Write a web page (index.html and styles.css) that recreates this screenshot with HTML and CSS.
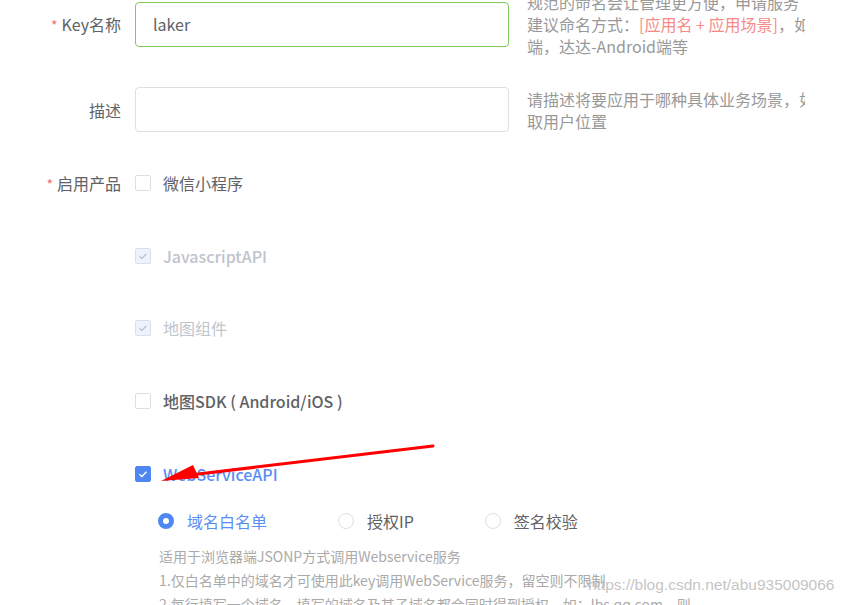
FILE: index.html
```html
<html>
  <head>
    <meta charset="UTF-8">
    <title>创建Key</title>
    <link rel="stylesheet" href="styles.css">
  </head>
  <body>
    <div class="page">
      <div class="form">
        <div class="form-row first">
          <div class="form-label"><span class="star">*</span>Key名称</div>
          <div class="input ok">laker</div>
          <div class="help">
            <div class="line">规范的命名会让管理更方便，申请服务</div>
            <div class="line">建议命名方式：<span class="hl">[应用名 + 应用场景]</span>，如：</div>
            <div class="line">端，达达-Android端等</div>
          </div>
        </div>

        <div class="form-row">
          <div class="form-label">描述</div>
          <div class="input"></div>
          <div class="help">
            <div class="line">请描述将要应用于哪种具体业务场景，如：</div>
            <div class="line">取用户位置</div>
          </div>
        </div>

        <div class="form-row products">
          <div class="form-label"><span class="star">*</span>启用产品</div>
          <div class="product-list">
            <div class="check-item">
              <span class="box"></span>
              <span class="check-text">微信小程序</span>
            </div>
            <div class="check-item disabled">
              <span class="box">
                <svg viewBox="0 0 16 16" width="16" height="16"><path d="M4.5 8.2l2.4 2.3 4.6-4.8" fill="none" stroke="#c0c4cc" stroke-width="1.3"/></svg>
              </span>
              <span class="check-text latin">JavascriptAPI</span>
            </div>
            <div class="check-item disabled">
              <span class="box">
                <svg viewBox="0 0 16 16" width="16" height="16"><path d="M4.5 8.2l2.4 2.3 4.6-4.8" fill="none" stroke="#c0c4cc" stroke-width="1.3"/></svg>
              </span>
              <span class="check-text">地图组件</span>
            </div>
            <div class="check-item">
              <span class="box"></span>
              <span class="check-text latin">地图SDK ( Android/iOS )</span>
            </div>
            <div class="check-item checked">
              <span class="box">
                <svg viewBox="0 0 16 16" width="16" height="16"><path d="M4.5 8.2l2.4 2.3 4.6-4.8" fill="none" stroke="#fff" stroke-width="1.4"/></svg>
              </span>
              <span class="check-text latin">WebServiceAPI</span>
            </div>

            <div class="radio-group">
              <div class="radio-item selected">
                <span class="dot"></span>
                <span>域名白名单</span>
              </div>
              <div class="radio-item">
                <span class="dot"></span>
                <span>授权IP</span>
              </div>
              <div class="radio-item">
                <span class="dot"></span>
                <span>签名校验</span>
              </div>
            </div>
            <div class="radio-help">
              <div>适用于浏览器端JSONP方式调用Webservice服务</div>
              <div>1.仅白名单中的域名才可使用此key调用WebService服务，留空则不限制</div>
              <div>2.每行填写一个域名，填写的域名及其子域名都会同时得到授权，如：lbs.qq.com，则</div>
            </div>
          </div>
        </div>
      </div>
    </div>

    <!-- annotation arrow -->
    <svg class="arrow" width="848" height="605" viewBox="0 0 848 605">
      <line x1="433" y1="446" x2="190" y2="475" stroke="#ff0000" stroke-width="3" stroke-linecap="round"/>
      <polygon points="161,481 193,465 199,478" fill="#ff0000"/>
    </svg>

    <div class="watermark">https://blog.csdn.net/abu935009066</div>
  </body>
</html>
```

FILE: styles.css
```css
body {
  margin: 0;
  background: #fff;
  font-family: "Noto Sans CJK SC", "Microsoft YaHei", sans-serif;
  color: #606266;
  overflow: hidden;
}
.page {
  width: 805px;
  height: 605px;
  overflow: hidden;
}
.form {
  display: flex;
  flex-direction: column;
}
.form-row {
  display: flex;
  align-items: center;
  margin-top: 30px;
}
.form-row.first {
  margin-top: -9px;
}
.form-label {
  width: 121px;
  margin-right: 14px;
  text-align: right;
  font-size: 16px;
  line-height: 22px;
  flex-shrink: 0;
}
.star {
  color: #f56c6c;
  font-size: 14px;
  margin-right: 4px;
}
.input {
  width: 374px;
  height: 45px;
  border: 1px solid #dcdfe6;
  border-radius: 4px;
  padding-left: 17px;
  box-sizing: border-box;
  font-size: 16px;
  line-height: 43px;
  color: #606266;
  flex-shrink: 0;
}
.input.ok {
  border-color: #82c95c;
}
.help {
  margin-left: 18px;
  font-size: 16px;
  line-height: 22px;
  color: #999;
  white-space: nowrap;
}
.hl {
  color: #f78989;
}
.products {
  align-items: flex-start;
  margin-top: 40px;
}
.product-list {
  display: flex;
  flex-direction: column;
}
.check-item {
  display: flex;
  align-items: center;
  height: 22px;
  margin-bottom: 50.7px;
  font-size: 16px;
}
.check-item:nth-child(5) {
  margin-bottom: 25px;
}
.box {
  width: 14px;
  height: 14px;
  border: 1px solid #dcdfe6;
  border-radius: 2px;
  background: #fff;
  margin-right: 12px;
  position: relative;
}
.box svg {
  position: absolute;
  left: -1px;
  top: -1px;
}
.check-text {
  color: #606266;
}
.latin {
  font-weight: 500;
}
.disabled .box {
  background: #edf2fc;
}
.disabled .check-text {
  color: #c0c4cc;
}
.checked .box {
  background: #4f86f2;
  border-color: #4f86f2;
}
.checked .check-text {
  color: #5b8ef5;
}
.radio-group {
  display: flex;
  margin-left: 23px;
  height: 22px;
  align-items: center;
  font-size: 16px;
}
.radio-item {
  display: flex;
  align-items: center;
  margin-right: 71px;
}
.dot {
  width: 14px;
  height: 14px;
  border: 1px solid #dcdfe6;
  border-radius: 50%;
  margin-right: 13px;
  box-sizing: content-box;
}
.selected .dot {
  width: 6px;
  height: 6px;
  border: 5px solid #4f86f2;
  background: #fff;
}
.selected {
  color: #5b8ef5;
}
.radio-help {
  margin-left: 24px;
  margin-top: 12px;
  font-size: 14px;
  line-height: 24px;
  color: #aaa;
  white-space: nowrap;
}
.arrow {
  position: absolute;
  left: 0;
  top: 0;
  pointer-events: none;
}
.watermark {
  position: absolute;
  left: 588px;
  top: 576px;
  font-family: "Liberation Sans", Arial, sans-serif;
  font-size: 15.5px;
  color: rgba(185, 185, 185, 0.85);
  pointer-events: none;
}
```
